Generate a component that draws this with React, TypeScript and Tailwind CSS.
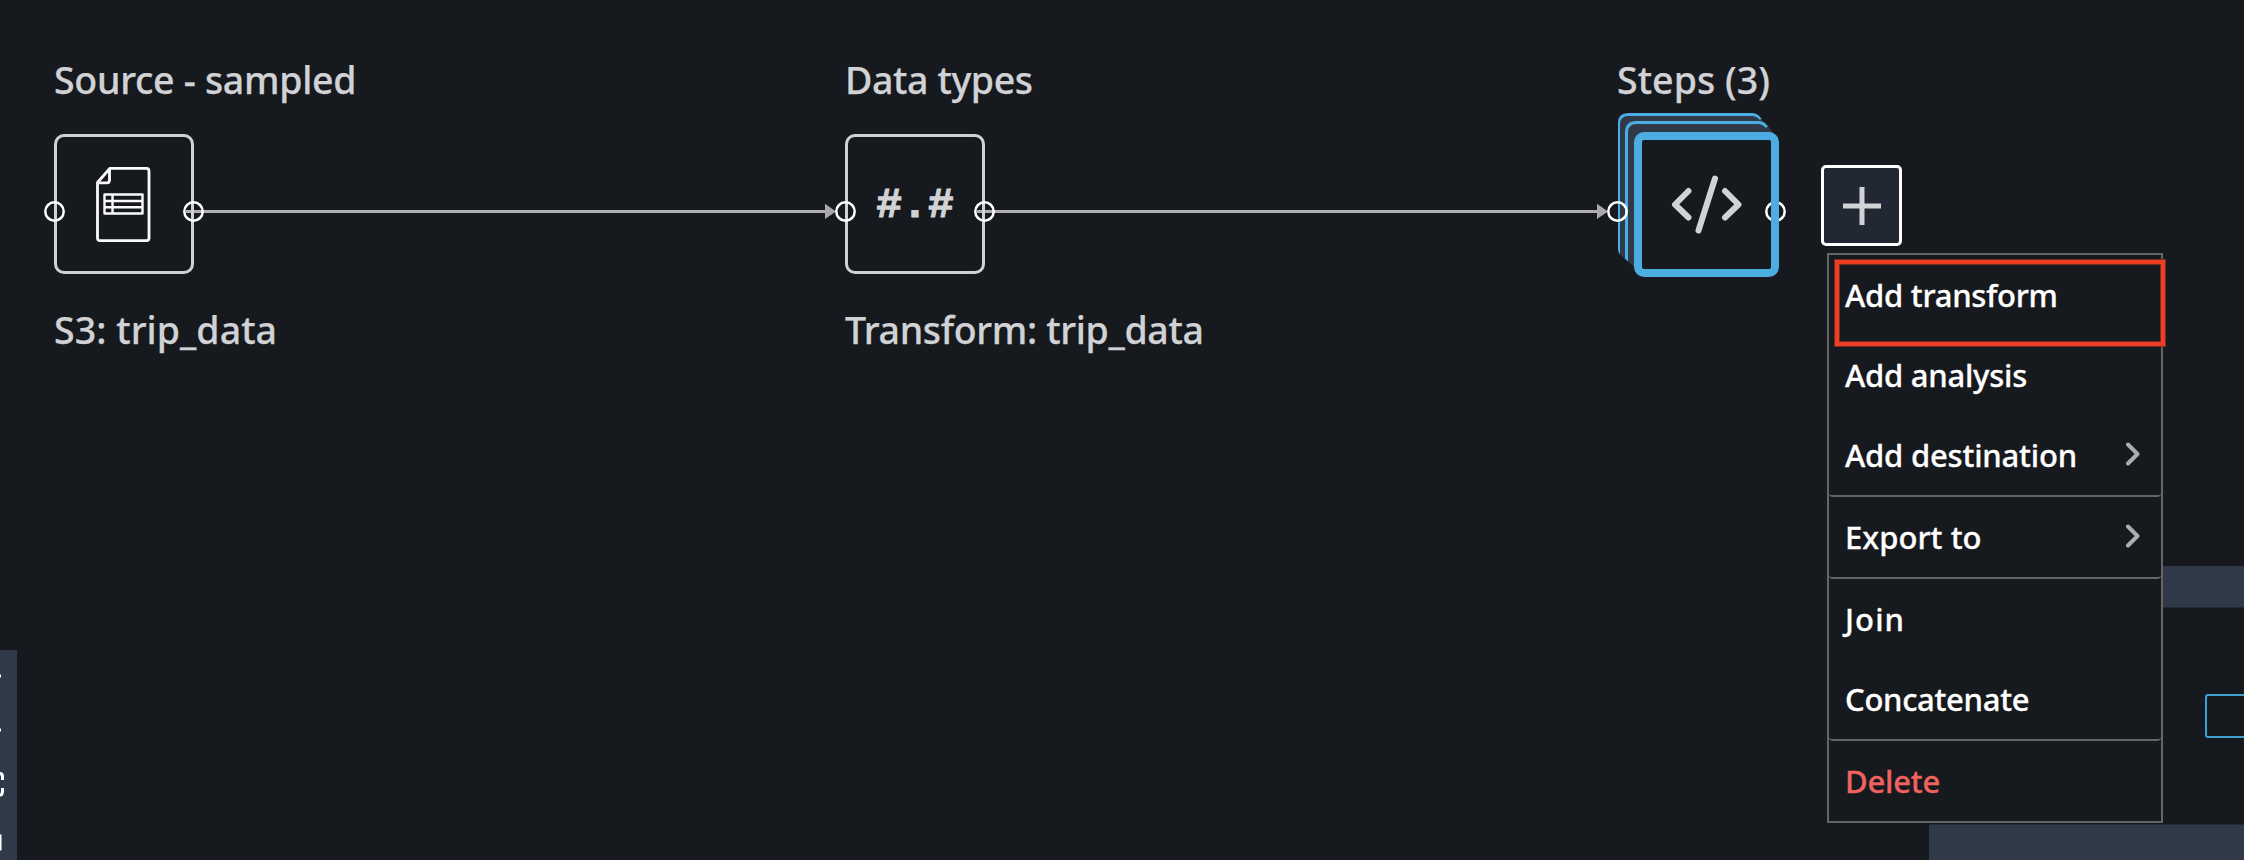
import React from "react";

function Port({ className }: { className: string }) {
  return (
    <svg className={`absolute size-[21px] ${className}`} viewBox="0 0 21 21" fill="none" stroke="#fff" strokeWidth="2.5">
      <circle cx="10.5" cy="10.5" r="9.2" />
    </svg>
  );
}

function Edge({ className }: { className: string }) {
  return (
    <div className={`absolute top-[203px] flex h-4 items-center ${className}`}>
      <span className="mt-px h-[2.5px] flex-1 bg-[#b0afb3]" />
      <svg className="h-4 w-[11px]" viewBox="0 0 11 16">
        <path d="M0 .7 11 8.5 0 16Z" fill="#a9a8ae" />
      </svg>
    </div>
  );
}

function Node({ className, title, titleClass, caption, captionClass, children }: {
  className: string;
  title: string;
  titleClass: string;
  caption?: string;
  captionClass?: string;
  children: React.ReactNode;
}) {
  return (
    <section className={`absolute top-[54px] flex flex-col items-start whitespace-nowrap text-[37.5px] leading-[52px] font-medium text-[#d1d2d5] [-webkit-text-stroke:0.25px] ${className}`}>
      <h2 className={titleClass}>{title}</h2>
      {children}
      {caption && <p className={captionClass}>{caption}</p>}
    </section>
  );
}

function NodeBox({ children }: { children: React.ReactNode }) {
  return (
    <div className="relative mt-7 mb-[30px]">
      <div className="flex size-[140px] items-center justify-center rounded-[10px] border-3 border-[#d1d2d5]">{children}</div>
      <Port className="top-[67px] -left-[10px]" />
      <Port className="top-[67px] -right-[10px]" />
    </div>
  );
}

const groups: { label: string; tracking: string; sub?: boolean; danger?: boolean }[][] = [
  [
    { label: "Add transform", tracking: "tracking-[-0.25px]" },
    { label: "Add analysis", tracking: "tracking-[-0.25px]" },
    { label: "Add destination", tracking: "tracking-[-0.2px]", sub: true },
  ],
  [{ label: "Export to", tracking: "tracking-[0.05px]", sub: true }],
  [
    { label: "Join", tracking: "tracking-[1.1px]" },
    { label: "Concatenate", tracking: "tracking-[-0.3px]" },
  ],
  [{ label: "Delete", tracking: "tracking-[-0.2px]", danger: true }],
];

function Menu() {
  return (
    <div className="absolute left-[1827px] top-[253px] w-[336px] border-2 border-[#656565] bg-[#16191d]">
      {groups.map((items, i) => (
        <div key={i} className={i < groups.length - 1 ? "rounded-b-[4px] border-b-2 border-[#656565]" : ""}>
          {items.map((item) => (
            <div key={item.label} className={`flex h-20 items-center justify-between pl-4 pr-5 text-[31px] leading-[80px] font-medium [-webkit-text-stroke:0.3px] ${item.tracking} ${item.danger ? "text-[#f0625f]" : "text-white"}`}>
              <span>{item.label}</span>
              {item.sub && (
                <svg className="-mt-0.5 h-6 w-4" viewBox="0 0 16 24" fill="none" stroke="#adadad" strokeWidth="4" strokeLinecap="round" strokeLinejoin="round">
                  <path d="M3 2.5 12.5 12 3 21.5" />
                </svg>
              )}
            </div>
          ))}
        </div>
      ))}
    </div>
  );
}

export default function App() {
  return (
    <div className="relative flex h-[860px] w-[2244px] items-end justify-between overflow-hidden bg-[#16191d] font-['Noto_Sans',sans-serif]">
      <aside className="h-[210px] w-[17px] bg-[#303947]">
        <svg className="h-[210px] w-[17px]" viewBox="0 0 17 210" fill="none" stroke="#fff" strokeWidth="3">
          <path d="M0 26H1M0 80H1M0 123.500Q2.500 123.500 2.500 126.500V130M2.500 138V141Q2.500 145 0 145M0 184.500V200.500" />
        </svg>
      </aside>

      <aside className="flex h-[294px] w-[315px] flex-col">
        <div className="ml-3 h-[41px] bg-[#303947]" />
        <div className="flex h-[217px] items-start justify-end border-t border-[#222935] pt-[86px]">
          <div className="h-11 w-[39px] rounded-l-[3px] border-2 border-r-0 border-[#3f9fd0]" />
        </div>
        <div className="flex-1 border-t border-[#222935] bg-[#303947]" />
      </aside>

      <Edge className="left-[186px] w-[650px]" />
      <Edge className="left-[977px] w-[631px]" />

      <Node className="left-[54px]" title="Source - sampled" titleClass="tracking-[-0.3px]" caption="S3: trip_data" captionClass="tracking-[0.05px]">
        <NodeBox>
          <svg className="-ml-[1px] h-[78px] w-[58px]" viewBox="0 -2 58 78" fill="none" stroke="#fafafa" strokeWidth="2.8" strokeLinejoin="round">
            <path d="M2.500 15.500 15 1.300H51.500Q54 1.300 54 4.300V71Q54 73.700 51.500 73.700H5Q2.500 73.700 2.500 71ZM2.500 15.800H12Q14.500 15.800 14.500 13V2" />
            <path d="M9.500 27.500H47.500V46.500H9.500ZM17.500 27.500V46.500M9.500 34H47.500M9.500 40.300H47.500" strokeWidth="2.400" />
          </svg>
        </NodeBox>
      </Node>

      <Node className="left-[845px]" title="Data types" titleClass="tracking-[-0.4px]" caption="Transform: trip_data" captionClass="tracking-[-0.35px]">
        <NodeBox>
          <span className="pt-1 font-['Liberation_Mono',monospace] text-[43px] font-bold [-webkit-text-stroke:1.2px]">#.#</span>
        </NodeBox>
      </Node>

      <Node className="left-[1617px]" title="Steps (3)" titleClass="tracking-[0.05px]">
        <div className="relative mt-[26px] ml-[17px]">
          <svg className="absolute -left-6 -top-[27px] h-[180px] w-[180px]" viewBox="1610 105 180 180" fill="none" strokeWidth="3">
            <clipPath id="stack">
              <path d="M1628 113H1752Q1757 113 1760 117L1773 132V140H1640V272L1620 254.500Q1618 252 1618 249V123Q1618 113 1628 113Z" />
            </clipPath>
            <g clipPath="url(#stack)" stroke="#4cade2">
              <path d="M1600 100H1800V300H1600Z" fill="#303947" />
              <path d="M1618.500 300V124.500Q1618.500 114.500 1628.500 114.500H1752Q1757 114.500 1761 119" />
              <path d="M1626.500 300V132.500Q1626.500 122.500 1636.500 122.500H1758Q1763 122.500 1767 127" />
            </g>
          </svg>
          <Port className="-left-[27px] top-[69px]" />
          <Port className="-right-[7px] top-[69px]" />
          <div className="relative flex size-[145px] items-center justify-center rounded-[10px] border-8 border-[#4cade2]">
            <svg className="h-[64px] w-[74px]" viewBox="1669.500 172.500 74 64" fill="none" stroke="#d1d2d5" strokeWidth="6" strokeLinecap="round" strokeLinejoin="round">
              <path d="M1688 190.500 1674.500 204 1688 217M1714.500 178 1698 230M1724.500 190.500 1738 204 1724.500 217" />
            </svg>
          </div>
        </div>
      </Node>

      <button className="absolute left-[1821px] top-[165px] flex size-[81px] items-center justify-center rounded-[5px] border-3 border-white bg-[#222833]">
        <svg className="size-[38px]" viewBox="0 0 38 38" stroke="#d1d2d5" strokeWidth="5">
          <path d="M19 0V38M0 19H38" />
        </svg>
      </button>

      <Menu />
      <div className="absolute left-[1834px] top-[259px] h-[88px] w-[332px] border border-[#7a2a20]">
        <div className="h-[86px] border-4 border-[#ec3e23]">
          <div className="h-[78px] border border-[#7a2a20]" />
        </div>
      </div>
    </div>
  );
}
